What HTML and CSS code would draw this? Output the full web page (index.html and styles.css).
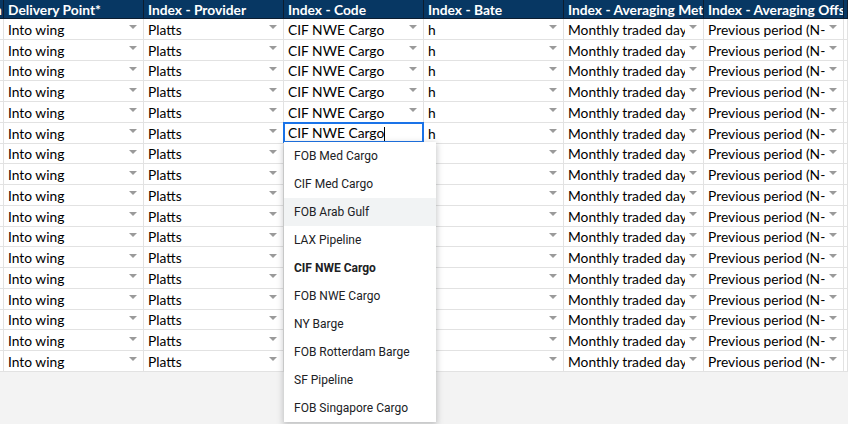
FILE: index.html
```html
<!DOCTYPE html>
<html>
<head>
<meta charset="utf-8">
<link rel="stylesheet" href="styles.css">
</head>
<body>
<div class="sheet">
  <div class="grid" id="grid">
    <div class="hd cut">n</div>
    <div class="hd">Delivery Point*</div>
    <div class="hd">Index - Provider</div>
    <div class="hd">Index - Code</div>
    <div class="hd">Index - Bate</div>
    <div class="hd">Index - Averaging Method</div>
    <div class="hd">Index - Averaging Offset</div>
    <div class="hd cut"></div>
  </div>
  <div class="active">CIF NWE Cargo<span class="caret"></span></div>
  <div class="menu">
    <div class="item">FOB Med Cargo</div>
    <div class="item">CIF Med Cargo</div>
    <div class="item hover">FOB Arab Gulf</div>
    <div class="item">LAX Pipeline</div>
    <div class="item sel">CIF NWE Cargo</div>
    <div class="item">FOB NWE Cargo</div>
    <div class="item">NY Barge</div>
    <div class="item">FOB Rotterdam Barge</div>
    <div class="item">SF Pipeline</div>
    <div class="item">FOB Singapore Cargo</div>
  </div>
</div>
<script>
  var g = document.getElementById('grid');
  var vals = ['Into wing','Platts','CIF NWE Cargo','h','Monthly traded days','Previous period (N-1)'];
  var html = '';
  for (var r = 0; r < 17; r++) {
    html += '<div class="c cut"></div>';
    for (var c = 0; c < 6; c++) {
      html += '<div class="c"><span class="t">' + vals[c] + '</span><span class="arr"></span></div>';
    }
    html += '<div class="c cut"></div>';
  }
  g.insertAdjacentHTML('beforeend', html);
</script>
</body>
</html>
```
FILE: styles.css
```css
html, body {
  margin: 0;
  padding: 0;
  background: #f3f3f3;
}
.sheet {
  position: relative;
  width: 848px;
  height: 424px;
  overflow: hidden;
}
.grid {
  display: grid;
  grid-template-columns: 4px repeat(6, 140px) 4px;
  grid-template-rows: 19px;
  grid-auto-rows: 20.76px;
  background: #ffffff;
  font-family: Lato, "Open Sans", sans-serif;
}
.hd {
  background: #073763;
  color: #ffffff;
  font-weight: 700;
  font-size: 13.8px;
  line-height: 19px;
  padding-left: 4px;
  white-space: nowrap;
  overflow: hidden;
  border-right: 1px solid #0c1d30;
  border-bottom: 1px solid #0c1d30;
  box-sizing: border-box;
}
.hd.cut {
  padding-left: 0;
  text-indent: -6px;
}
.c {
  display: flex;
  align-items: flex-end;
  box-sizing: border-box;
  border-right: 1px solid #e2e2e2;
  border-bottom: 1px solid #e2e2e2;
  padding-left: 4px;
  padding-right: 6px;
  padding-bottom: 1px;
  overflow: hidden;
  font-size: 13.8px;
  line-height: 17px;
  color: #000;
  white-space: nowrap;
}
.c.cut {
  padding: 0;
}
.t {
  flex: 1;
  overflow: hidden;
  white-space: nowrap;
}
.arr {
  flex: none;
  align-self: center;
  width: 0;
  height: 0;
  margin-left: 4px;
  margin-top: -2px;
  border-left: 4px solid transparent;
  border-right: 4px solid transparent;
  border-top: 4px solid #9a9a9a;
}
.active {
  position: absolute;
  left: 283px;
  top: 122px;
  width: 141px;
  height: 21px;
  box-sizing: border-box;
  border: 2px solid #1a73e8;
  background: #fff;
  font-family: Lato, "Open Sans", sans-serif;
  font-size: 13.8px;
  line-height: 17px;
  padding-left: 3px;
  color: #000;
  white-space: nowrap;
}
.caret {
  display: inline-block;
  width: 1px;
  height: 14px;
  background: #000;
  vertical-align: -3px;
}
.menu {
  position: absolute;
  left: 284px;
  top: 142px;
  width: 152px;
  background: #fff;
  box-shadow: 0 2px 6px 1px rgba(60, 64, 67, 0.28);
  font-family: Roboto, sans-serif;
  font-size: 12px;
  color: #202124;
}
.item {
  height: 28px;
  line-height: 28px;
  padding-left: 10px;
  white-space: nowrap;
}
.item.hover {
  background: #f1f3f4;
}
.item.sel {
  font-weight: 700;
}
```
